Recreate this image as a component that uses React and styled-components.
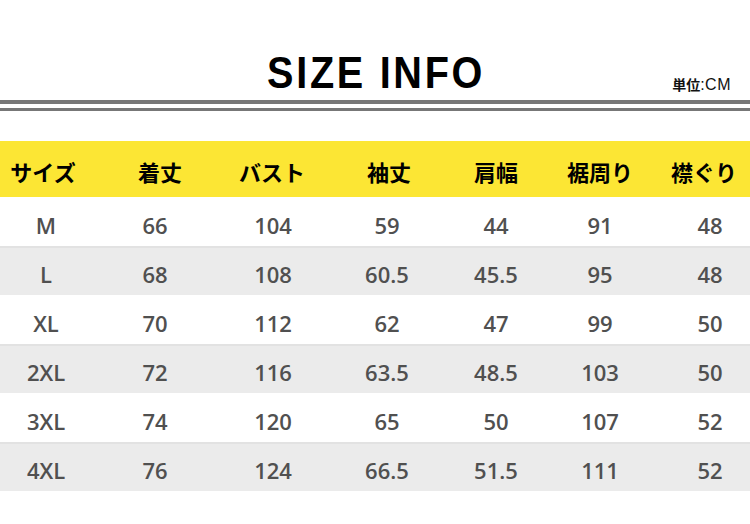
import React from 'react';
import styled, { createGlobalStyle } from 'styled-components';

const GlobalStyle = createGlobalStyle`
  html, body {
    margin: 0;
    padding: 0;
    background: #fff;
  }
  body {
    font-family: "Open Sans", "Noto Sans CJK JP", sans-serif;
  }
`;

const Page = styled.div`
  width: 750px;
  height: 524px;
  background: #fff;
  overflow: hidden;
`;

const TitleBar = styled.div`
  display: grid;
  grid-template-columns: 1fr auto 1fr;
  height: 100px;
  box-sizing: border-box;
  padding-top: 51px;
`;

/* the original face is a tall condensed gothic: squeeze Liberation Sans */
const Title = styled.h1`
  grid-column: 2;
  margin: 0 -3px 0 0;
  font-family: "Liberation Sans", Arial, sans-serif;
  font-weight: 700;
  font-size: 44px;
  line-height: 44px;
  letter-spacing: 3px;
  color: #000;
  align-self: start;
  transform: scaleX(0.9);
`;

const Unit = styled.div`
  grid-column: 3;
  justify-self: end;
  align-self: end;
  margin: 0 19px 7px 0;
  font-family: "Noto Sans CJK JP", sans-serif;
  font-weight: 700;
  font-size: 14px;
  line-height: 16px;
  color: #111;

  span {
    font-family: "Liberation Sans", sans-serif;
    font-weight: 400;
    font-size: 16px;
    letter-spacing: 0.5px;
  }
`;

const Rule = styled.div`
  height: ${(p) => p.$h}px;
  margin-top: ${(p) => p.$gap}px;
  background: #777;
`;

const Table = styled.div`
  margin-top: 30px;
`;

const Row = styled.div`
  display: grid;
  grid-template-columns: 90px 134px 96px 136px 80px 128px 86px;
  height: ${(p) => (p.$head ? 56 : 49)}px;
  box-sizing: border-box;
  background: ${(p) => (p.$head ? '#fce634' : p.$alt ? '#ebebeb' : '#fff')};
  border-top: ${(p) => (p.$alt ? '2px solid #e2e2e2' : '0')};
`;

const HeadCell = styled.div`
  display: flex;
  align-items: center;
  justify-content: center;
  padding-top: 4px;
  box-sizing: border-box;
  transform: translateX(${(p) => p.$shift}px);
  font-family: "Noto Sans CJK JP", sans-serif;
  font-weight: 700;
  font-size: 22px;
  color: #000;
  white-space: nowrap;
`;

const Cell = styled.div`
  display: flex;
  align-items: center;
  justify-content: center;
  padding-top: ${(p) => (p.$alt ? 4 : 6)}px;
  box-sizing: border-box;
  transform: translateX(${(p) => p.$shift}px);
  font-family: "Open Sans", sans-serif;
  font-weight: 600;
  font-size: 22px;
  color: #505050;
  white-space: nowrap;
`;

const columns = [
  { label: 'サイズ', head: -2, data: 1 },
  { label: '着丈', head: 3, data: -2 },
  { label: 'バスト', head: 0, data: 1 },
  { label: '袖丈', head: 1, data: -1 },
  { label: '肩幅', head: 0, data: 0 },
  { label: '裾周り', head: 0, data: 0 },
  { label: '襟ぐり', head: -3, data: 3 },
];

const rows = [
  ['M', '66', '104', '59', '44', '91', '48'],
  ['L', '68', '108', '60.5', '45.5', '95', '48'],
  ['XL', '70', '112', '62', '47', '99', '50'],
  ['2XL', '72', '116', '63.5', '48.5', '103', '50'],
  ['3XL', '74', '120', '65', '50', '107', '52'],
  ['4XL', '76', '124', '66.5', '51.5', '111', '52'],
];

export default function App() {
  return (
    <Page>
      <GlobalStyle />
      <TitleBar>
        <Title>SIZE INFO</Title>
        <Unit>
          単位<span>:CM</span>
        </Unit>
      </TitleBar>
      <Rule $h={4} $gap={0} />
      <Rule $h={3} $gap={4} />
      <Table>
        <Row $head>
          {columns.map((c) => (
            <HeadCell key={c.label} $shift={c.head}>
              {c.label}
            </HeadCell>
          ))}
        </Row>
        {rows.map((r, i) => (
          <Row key={r[0]} $alt={i % 2 === 1}>
            {r.map((v, j) => (
              <Cell key={j} $alt={i % 2 === 1} $shift={columns[j].data}>
                {v}
              </Cell>
            ))}
          </Row>
        ))}
      </Table>
    </Page>
  );
}
